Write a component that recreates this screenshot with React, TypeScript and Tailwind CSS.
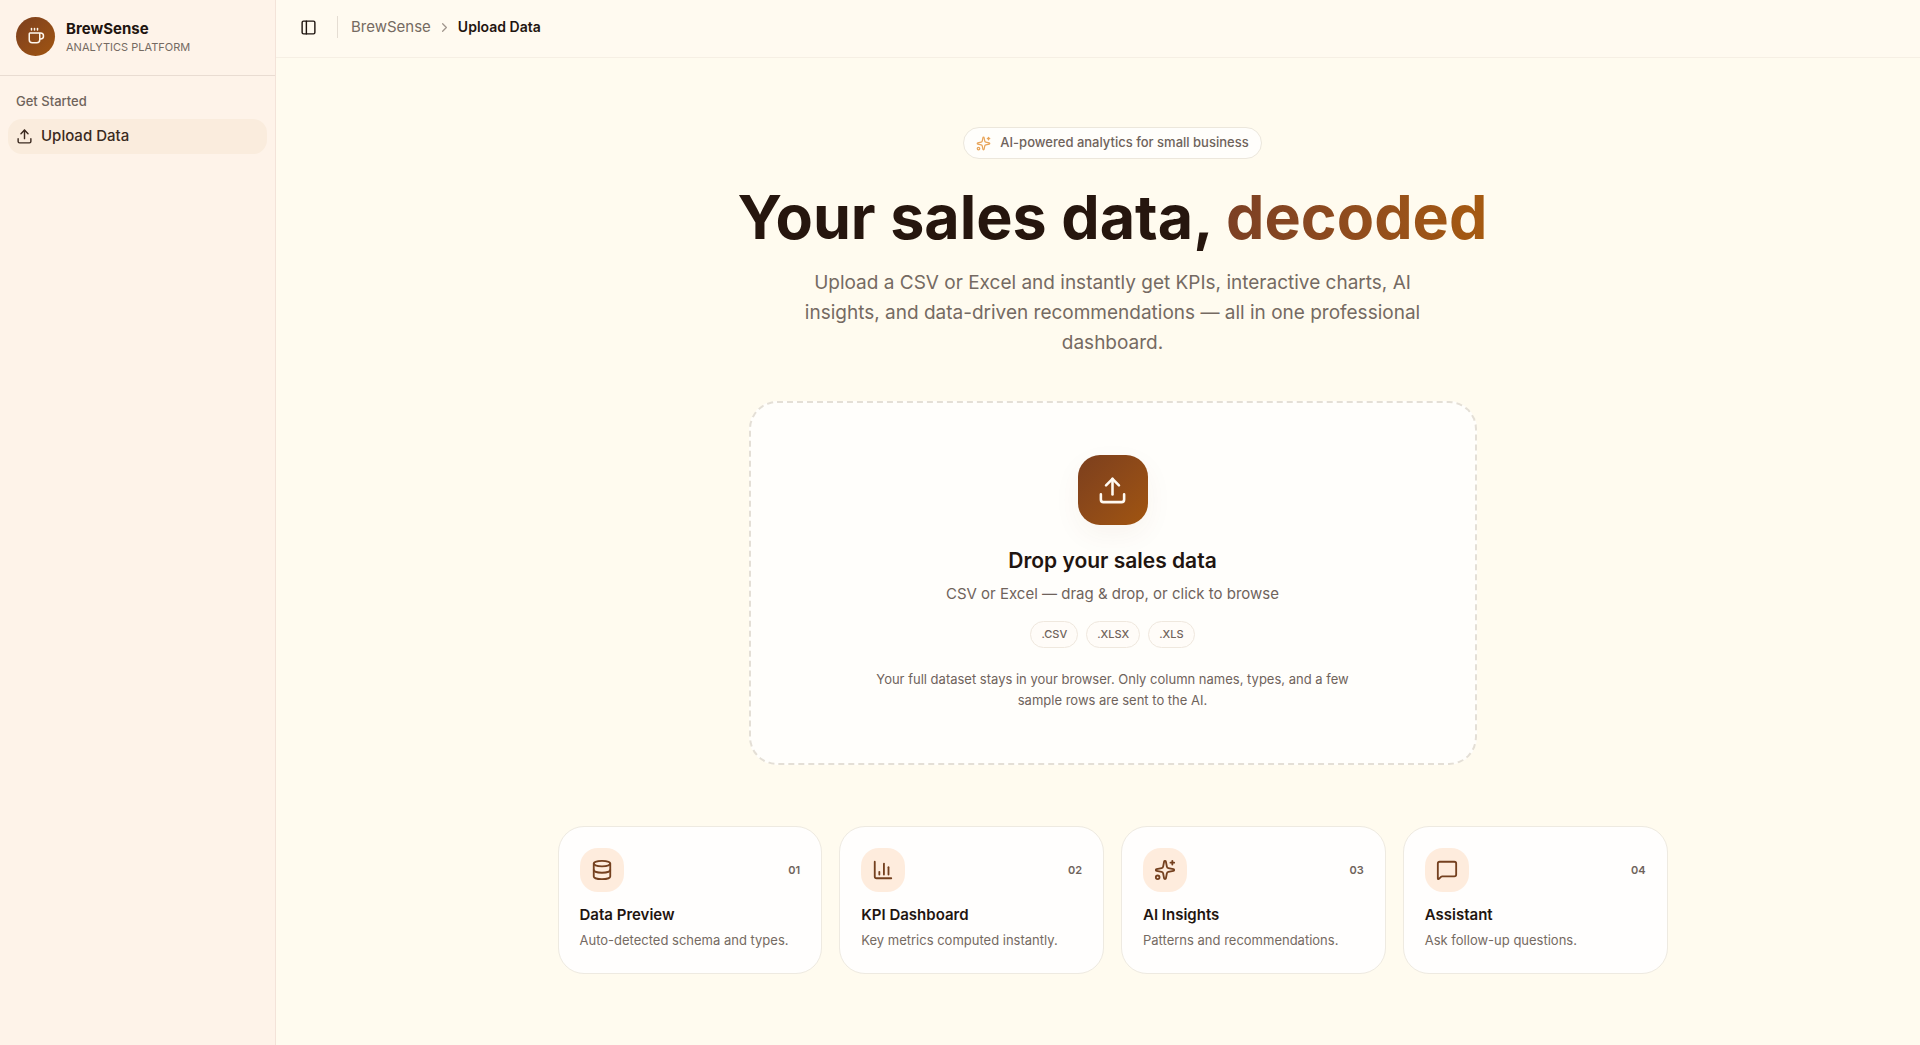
import { ChartColumn, ChevronRight, Coffee, Database, MessageSquare, PanelLeft, Sparkles, Upload } from 'lucide-react';
import type { LucideIcon } from 'lucide-react';

type Feature = {
  icon: LucideIcon;
  step: string;
  title: string;
  description: string;
};

const features: Feature[] = [
  { icon: Database, step: '01', title: 'Data Preview', description: 'Auto-detected schema and types.' },
  { icon: ChartColumn, step: '02', title: 'KPI Dashboard', description: 'Key metrics computed instantly.' },
  { icon: Sparkles, step: '03', title: 'AI Insights', description: 'Patterns and recommendations.' },
  { icon: MessageSquare, step: '04', title: 'Assistant', description: 'Ask follow-up questions.' },
];

const formats = ['.CSV', '.XLSX', '.XLS'];

const Sidebar = () => (
  <aside className="w-[276px] shrink-0 border-r border-[#f3e3d9] bg-[#fef3e9]">
    <div className="flex h-[76px] items-center gap-[11px] border-b border-[#e9dcd2] px-4 pb-[3px]">
      <div className="flex size-[39px] items-center justify-center rounded-full bg-linear-to-br from-[#7c3f1d] to-[#a1550f] text-[#fff7ed]">
        <Coffee size={18} />
      </div>
      <div className="pt-px">
        <div className="text-[15px] leading-5 font-bold">BrewSense</div>
        <div className="text-[11px] leading-4 text-[#756a62] uppercase">Analytics Platform</div>
      </div>
    </div>
    <nav className="px-2 pt-[9px]">
      <h2 className="flex h-[34px] items-center px-2 text-[13px] font-medium text-[#6f635b]">Get Started</h2>
      <a href="#upload" className="flex h-[35px] items-center gap-2 rounded-[14px] bg-[#faecdd] px-2 text-[15px] font-medium text-[#3b2a20]">
        <Upload size={17} />
        Upload Data
      </a>
    </nav>
  </aside>
);

const TopBar = () => (
  <header className="flex h-[58px] items-center border-b border-[#f6efe4] bg-[#fffaf0] pb-[3px] pl-6">
    <button type="button" aria-label="Toggle sidebar" className="flex size-[17px] items-center justify-center">
      <PanelLeft size={17} />
    </button>
    <div className="mr-[13px] ml-5 h-[22px] w-px bg-[#e5ddd3]" />
    <nav aria-label="Breadcrumb" className="flex items-center gap-[6px] text-[15px]">
      <a href="#home" className="text-[#756a62]">BrewSense</a>
      <ChevronRight size={15} className="text-[#a0968d]" />
      <span className="text-sm font-semibold">Upload Data</span>
    </nav>
  </header>
);

const Hero = () => (
  <section className="flex flex-col items-center text-center">
    <div className="flex h-8 items-center gap-[9px] rounded-full border border-[#ece7dc] bg-[#fffefb] px-3 text-[13px] font-medium text-[#6f635b]">
      <Sparkles size={15} className="text-[#e8a55a]" />
      AI-powered analytics for small business
    </div>
    <h1 className="mt-5 text-[61px] leading-[76px] font-bold text-[#26160e]">
      Your sales data,{' '}
      <span className="bg-linear-to-r from-[#7c4024] to-[#a65a10] bg-clip-text text-transparent">decoded</span>
    </h1>
    <p className="mt-[13px] max-w-[660px] text-[19px] leading-[30px] text-[#756a62]">
      Upload a CSV or Excel and instantly get KPIs, interactive charts, AI insights, and data-driven
      recommendations — all in one professional dashboard.
    </p>
  </section>
);

const DropZone = () => (
  <button
    type="button"
    className="mx-auto mt-[43px] flex w-full max-w-[728px] flex-col items-center rounded-[28px] border-2 border-dashed border-[#e4dfd6] bg-[#fffefb] pt-[52px] pb-[52px]"
  >
    <span className="flex size-[70px] items-center justify-center rounded-[22px] bg-linear-to-br from-[#7c3f1d] to-[#a1550f] text-[#fffaf2] shadow-[0_10px_28px_rgba(124,63,29,0.05)]">
      <Upload size={31} />
    </span>
    <span className="mt-[22px] text-[21px] leading-7 font-semibold">Drop your sales data</span>
    <span className="mt-2 text-[15px] leading-[22px] text-[#6f635b]">CSV or Excel — drag &amp; drop, or click to browse</span>
    <span className="mt-4 flex gap-2">
      {formats.map((format) => (
        <span
          key={format}
          className="flex h-[27px] items-center rounded-full border border-[#efe8de] bg-[#fffcf8] px-[10px] text-[11px] font-medium text-[#6f635b]"
        >
          {format}
        </span>
      ))}
    </span>
    <span className="mt-[21px] max-w-[480px] text-[13px] leading-[21px] text-[#6f635b]">
      Your full dataset stays in your browser. Only column names, types, and a few sample rows are sent to the AI.
    </span>
  </button>
);

const FeatureCard = ({ icon: Icon, step, title, description }: Feature) => (
  <article className="rounded-[26px] border border-[#eeeae1] bg-[#fffefd] px-[21px] pt-[21px] pb-[22px]">
    <div className="flex items-center justify-between">
      <div className="flex size-11 items-center justify-center rounded-[18px] bg-[#feecdd] text-[#74401f]">
        <Icon size={22} />
      </div>
      <span className="text-[11px] font-semibold text-[#6f635b]">{step}</span>
    </div>
    <h3 className="mt-3 text-[15px] leading-[22px] font-semibold">{title}</h3>
    <p className="mt-[3px] text-[13px] leading-[22px] text-[#756a62]">{description}</p>
  </article>
);

export default function App() {
  return (
    <div className="flex min-h-screen bg-[#fffbef] font-['Inter',sans-serif] text-[#1f1510]">
      <Sidebar />
      <div className="flex min-w-0 flex-1 flex-col">
        <TopBar />
        <main className="mr-8 ml-[61px] flex-1 pt-[69px] pb-16">
          <Hero />
          <DropZone />
          <section className="mx-auto mt-[61px] grid max-w-[1110px] grid-cols-4 gap-[17px]">
            {features.map((feature) => (
              <FeatureCard key={feature.step} {...feature} />
            ))}
          </section>
        </main>
      </div>
    </div>
  );
}
